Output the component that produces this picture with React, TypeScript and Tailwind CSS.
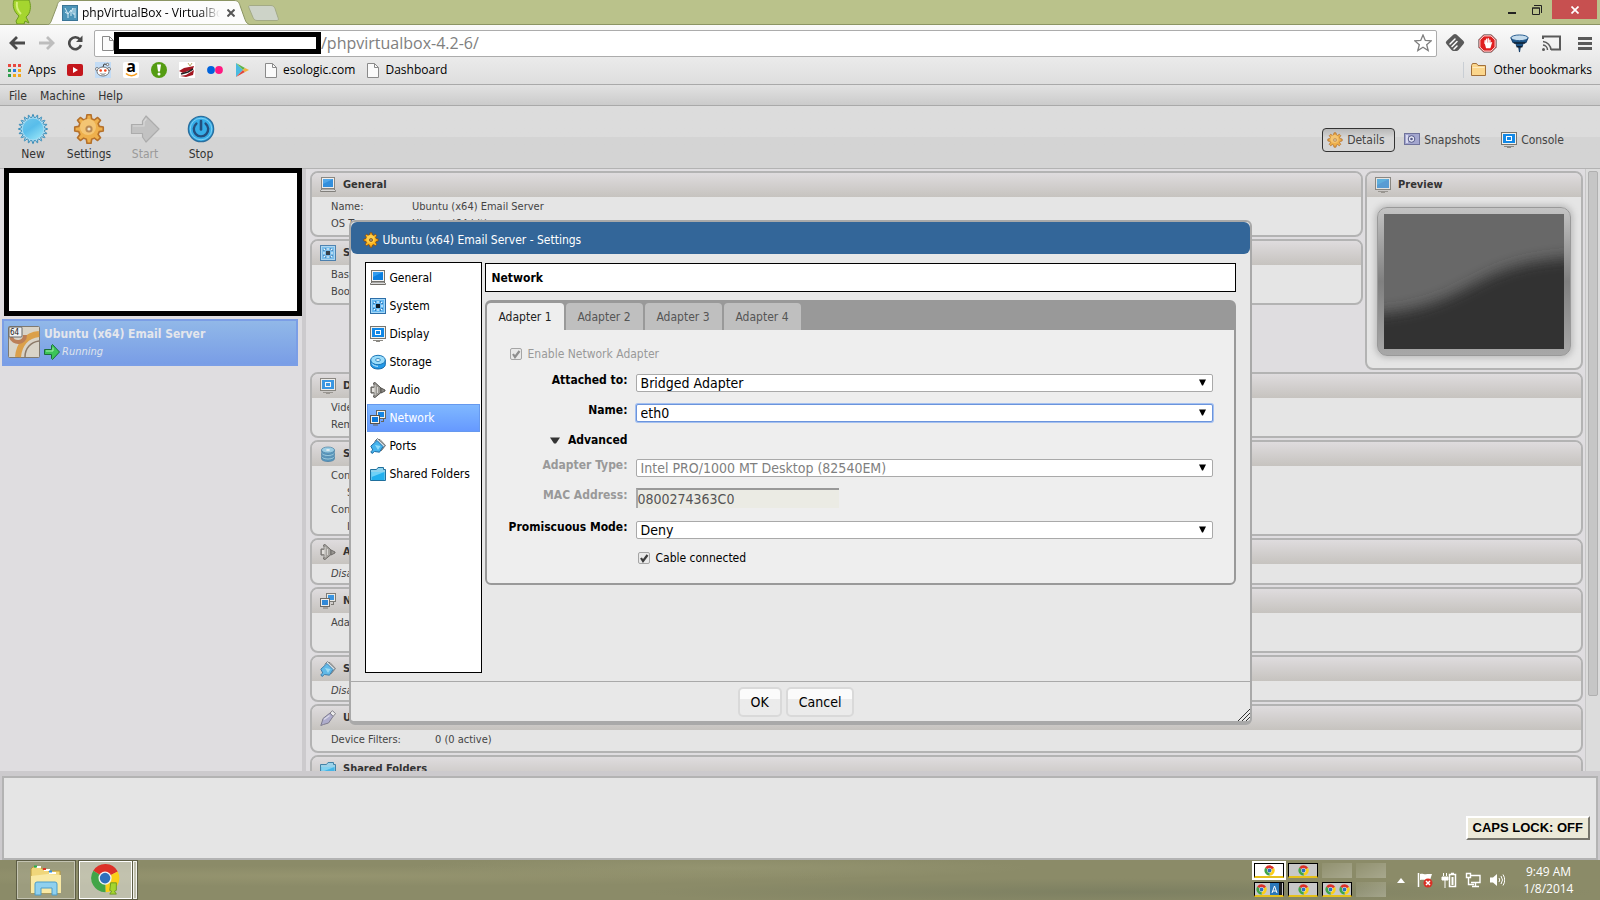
import { ReactNode, useState } from 'react'

const UI_FONT = "font-['DejaVu_Sans_Condensed','DejaVu_Sans',sans-serif]"
const CHROME_FONT = "font-['Open_Sans','Noto_Sans',sans-serif]"

/* ---------- icons ---------- */

function toothed(teeth: number, outer: number, inner: number, c: number, flat: number) {
  const pts: string[] = []
  const step = (Math.PI * 2) / teeth
  for (let i = 0; i < teeth; i++) {
    const a = i * step - Math.PI / 2
    const at = (r: number, t: number) => `${(c + r * Math.cos(t)).toFixed(2)},${(c + r * Math.sin(t)).toFixed(2)}`
    pts.push(at(inner, a - step * 0.32), at(outer, a - step * flat), at(outer, a + step * flat), at(inner, a + step * 0.32))
  }
  return pts.join(' ')
}

function Svg({ size = 16, box = 16, children }: { size?: number; box?: number; children: ReactNode }) {
  return (
    <svg width={size} height={size} viewBox={`0 0 ${box} ${box}`} className="shrink-0" fill="none" aria-hidden="true">
      {children}
    </svg>
  )
}

function GearIcon({ size = 16, muted = false }: { size?: number; muted?: boolean }) {
  return (
    <Svg size={size} box={32}>
      <polygon points={toothed(8, 14.4, 10.6, 16, 0.18)} fill={muted ? '#eeb04c' : '#ffb820'} stroke={muted ? '#b5702a' : '#8a4708'} strokeWidth="1.6" strokeLinejoin="round" />
      <circle cx="15" cy="14" r="8" fill={muted ? '#f6cf85' : '#ffd95e'} opacity="0.7" />
      <circle cx="16" cy="16" r="3.6" fill={muted ? '#b98a54' : '#5a3510'} />
      <circle cx="16" cy="16" r="1.6" fill="#f0e6d0" />
    </Svg>
  )
}

function NewIcon() {
  return (
    <Svg size={32} box={32}>
      <defs>
        <linearGradient id="burst" x1="0" y1="0" x2="0.7" y2="1">
          <stop offset="0" stopColor="#6fc7ec" />
          <stop offset="0.5" stopColor="#58bdea" />
          <stop offset="1" stopColor="#8fe0f6" />
        </linearGradient>
      </defs>
      <polygon points={toothed(20, 14.6, 11.6, 16, 0.04)} fill="#a9dcf2" stroke="#3c8db8" strokeWidth="1" />
      <circle cx="16" cy="16" r="10.4" fill="url(#burst)" />
    </Svg>
  )
}

function StartIcon() {
  return (
    <Svg size={32} box={32}>
      <path d="M2.500 11.500h11V8l3.500-5L30 16 17 29l-3.500-5v-3.500h-11z" fill="#c2c2c2" stroke="#acacac" strokeWidth="1.2" strokeLinejoin="round" />
      <path d="M4 13h11V8.500L17.500 5.500" stroke="#d8d8d8" strokeWidth="1.2" />
    </Svg>
  )
}

function StopIcon() {
  return (
    <Svg size={32} box={32}>
      <circle cx="16" cy="16" r="12.6" fill="#36aee8" stroke="#2a6e9e" strokeWidth="1.4" />
      <circle cx="16" cy="16" r="10.8" stroke="#7fd0f4" strokeWidth="1" />
      <path d="M11.4 10.6a7.2 7.2 0 1 0 9.2 0" stroke="#23507f" strokeWidth="2.4" strokeLinecap="round" />
      <path d="M16 8v8.5" stroke="#23507f" strokeWidth="2.6" strokeLinecap="round" />
    </Svg>
  )
}

function GeneralIcon() {
  return (
    <Svg>
      <rect x="1.5" y="0.5" width="13" height="11" fill="#f4f4f4" stroke="#77756e" />
      <rect x="3" y="2" width="10" height="8" fill="#0a7fe0" />
      <path d="M3 2h10L3 7z" fill="#2f9bef" />
      <path d="M2 12h12l1.5 1.5v1H.5v-1z" fill="#dcdcdc" stroke="#6f6d68" />
    </Svg>
  )
}

function SystemIcon() {
  return (
    <Svg>
      <rect x="0.5" y="0.5" width="15" height="15" fill="#66b9f2" stroke="#2c6ea8" />
      <rect x="1.5" y="1.5" width="13" height="13" stroke="#a5d8f8" />
      <rect x="6" y="6" width="4" height="4" fill="#101c28" />
      <path d="M8 3v2M8 11v2M3 8h2M11 8h2M4 4l1 1M12 4l-1 1M4 12l1-1M12 12l-1-1" stroke="#fff" />
      <path d="M5.5 3v1.5M10.5 3v1.5M5.5 11.5V13M10.5 11.5V13M3 5.5h1.5M3 10.5h1.5M11.5 5.5H13M11.5 10.5H13" stroke="#1b4f86" strokeWidth="0.6" />
    </Svg>
  )
}

function DisplayIcon() {
  return (
    <Svg>
      <rect x="0.5" y="0.5" width="15" height="12" fill="#f2f2ee" stroke="#77756e" />
      <rect x="2" y="2" width="12" height="9" fill="#1288e6" />
      <rect x="5.5" y="4.5" width="5" height="4" fill="#1288e6" stroke="#fff" />
      <path d="M3 14.5h10M6 15.5h4" stroke="#8c8a84" />
    </Svg>
  )
}

function PreviewIcon() {
  return (
    <Svg>
      <rect x="0.5" y="0.5" width="15" height="12" fill="#e8e8e4" stroke="#77756e" />
      <rect x="2" y="2" width="12" height="9" fill="#3a8fd4" />
      <path d="M2 2h12L2 8z" fill="#42a6de" />
      <path d="M3 14.5h10M6 15.5h4" stroke="#8c8a84" />
    </Svg>
  )
}

function StorageIcon() {
  return (
    <Svg>
      <path d="M.7 6v4.5C.7 13 4 15 8 15s7.300-2 7.300-4.500V6z" fill="#2299e8" stroke="#1566a6" />
      <ellipse cx="8" cy="6" rx="7.300" ry="4.700" fill="#9adcfa" stroke="#1b77b8" />
      <ellipse cx="8" cy="6" rx="2.400" ry="1.500" fill="#e9f7fe" stroke="#3c8fc4" />
      <path d="M2 9.500c1 2 3.500 2.800 6 2.800" stroke="#d4f1ff" />
    </Svg>
  )
}

function StackIcon() {
  return (
    <Svg>
      {[11, 7.5, 4].map((y) => (
        <g key={y}>
          <path d={`M1.500 ${y}v1.500c0 1.800 3 3 6.500 3s6.500-1.200 6.500-3v-1.500z`} fill="#3c93c8" stroke="#2c6c98" strokeWidth="0.8" />
          <ellipse cx="8" cy={y} rx="6.500" ry="3" fill="#8ccbe8" stroke="#37799f" strokeWidth="0.8" />
        </g>
      ))}
      <ellipse cx="8" cy="4" rx="2" ry="0.9" fill="#e4f2f8" />
    </Svg>
  )
}

function AudioIcon() {
  return (
    <Svg>
      <path d="M1 5L4.500 5 3.500 1 5 .500 11 6v4.500L5 15.500 3.500 15l1-4H1z" fill="#9b9994" stroke="#55534f" strokeLinejoin="round" />
      <path d="M5 3v10M7.500 5v6" stroke="#d8d6d2" />
      <path d="M2 6h2.500v4H2z" fill="#e4e2de" />
      <path d="M11 6l4 2v1l-4 2z" fill="#8b8984" stroke="#55534f" strokeLinejoin="round" />
    </Svg>
  )
}

function NetworkIcon() {
  return (
    <Svg>
      <rect x="6.500" y="0.500" width="9" height="8" fill="#f0f0ec" stroke="#66645e" />
      <rect x="8" y="2" width="6" height="5" fill="#1585e4" />
      <path d="M13 11.500h-2M13.500 9v3" stroke="#66645e" />
      <rect x="0.500" y="5.500" width="9" height="8" fill="#f4f4f0" stroke="#55534e" />
      <rect x="2" y="7" width="6" height="5" fill="#0a78da" />
      <path d="M3 15h5" stroke="#66645e" />
    </Svg>
  )
}

function PortsIcon() {
  return (
    <Svg>
      <path d="M6 1.500h4l5.500 6L11 13" stroke="#77756e" />
      <path d="M4.500 3.500l3-3 7.500 7-3.500 4.500" fill="#dfe6ea" stroke="#6c7880" />
      <path d="M.8 8.200L7 2.500l6 6-3.500 5.700-5-.7-2.500 2-1.200-1.800 2-1.700z" fill="#45b4ee" stroke="#1b6ba4" strokeLinejoin="round" />
      <path d="M5 7l3 5 2.500-4z" fill="#8fdcfb" />
    </Svg>
  )
}

function FolderIcon() {
  return (
    <Svg>
      <path d="M.5 14.500V3.500h6l1.500-2h5.500v2h2v11z" fill="#8ed3ee" stroke="#1f6f9c" />
      <path d="M1.500 6h13v8h-13z" fill="#22b0ee" />
      <path d="M1.500 6h13L1.500 11z" fill="#6ed2f8" />
    </Svg>
  )
}

function UsbIcon() {
  return (
    <Svg>
      <path d="M10 3l2.500-2.300 3 3L13 6.500z" fill="#f2f2f2" stroke="#6e6c76" />
      <path d="M3 8.500l7-5.500 3 3.500-4.500 6.500-5 1.500L.8 15.500 2 12z" fill="#a6a4cc" stroke="#6a6880" strokeLinejoin="round" />
      <path d="M4 9.500l5.500-4" stroke="#dddcf0" strokeWidth="1.500" />
    </Svg>
  )
}

function CameraIcon() {
  return (
    <Svg>
      <rect x="0.500" y="1.500" width="15" height="11" fill="#a3a6cf" stroke="#70739c" />
      <rect x="2" y="3" width="2" height="8" fill="#d9daf0" />
      <circle cx="7.500" cy="7" r="3.300" fill="#e6e8f6" stroke="#565a88" />
      <circle cx="7.500" cy="7" r="1.300" fill="#565a88" />
    </Svg>
  )
}

function PageIcon() {
  return (
    <svg width="12" height="15" viewBox="0 0 12 15" className="shrink-0" fill="none" aria-hidden="true">
      <path d="M.5.5h7l4 4v10H.5z" fill="#fafafa" stroke="#8a8a8a" />
      <path d="M7.500.500v4h4" stroke="#8a8a8a" />
    </svg>
  )
}

function ChromeLogo({ size }: { size: number }) {
  return (
    <Svg size={size} box={32}>
      <path d="M16 16L3.500 8.200A15 15 0 0 1 29.500 9z" fill="#dc3128" />
      <path d="M16 16L29.500 9A15 15 0 0 1 16.500 31z" fill="#fbcf18" />
      <path d="M16 16l.5 15A15 15 0 0 1 3.500 8.200z" fill="#42a548" />
      <circle cx="16" cy="16" r="7" fill="#f4f4f4" />
      <circle cx="16" cy="16" r="5.600" fill="#2f70bd" />
    </Svg>
  )
}

/* ---------- browser chrome ---------- */

function TabStrip() {
  return (
    <header className="flex h-[25px] items-start border-b border-[#8b9463] bg-[#bac28b]">
      <svg width="20" height="24" viewBox="0 0 20 24" className="ml-3 shrink-0" aria-hidden="true">
        <path d="M2 0h15c2 4 2 11-1 15l-2 2 3 6-4-2-1 3H5l-1-3 3-5C2 12 0 6 2 0z" fill="#a5d52f" stroke="#6d9a1e" />
        <path d="M5 2c-1 5 1 9 4 12" stroke="#d6f07c" strokeWidth="2" fill="none" />
      </svg>
      <div className="relative ml-[14px] flex h-[25px] w-[206px] items-center pl-4">
        <svg className="absolute inset-0" width="206" height="25" viewBox="0 0 206 25" fill="none" aria-hidden="true">
          <path d="M0 25c4 0 5-3 6-6l5-13c1-4 2-5.500 6-5.500h171c4 0 5 2 6 5l5 14c1 3 3 5.500 7 5.500z" fill="#fcfcfc" stroke="#8b9463" />
        </svg>
        <svg className="relative shrink-0" width="16" height="16" viewBox="0 0 16 16" fill="none" aria-hidden="true">
          <rect x="0.500" y="0.500" width="15" height="15" fill="#4c94b8" stroke="#3a7596" />
          <path d="M3 3l3 6v4M13 3v10M3 7l3 2 3-4v6M9 7l2-4v6h2" stroke="#d8eef8" />
        </svg>
        <span className="relative ml-1 w-[138px] overflow-hidden bg-linear-to-r from-black from-85% to-transparent bg-clip-text text-xs whitespace-nowrap text-transparent">
          phpVirtualBox - VirtualBox
        </span>
        <button aria-label="Close tab" className="relative ml-[7px]">
          <svg width="8" height="8" viewBox="0 0 8 8" aria-hidden="true">
            <path d="M.5.500l7 7M7.500.500l-7 7" stroke="#555" strokeWidth="2" />
          </svg>
        </button>
      </div>
      <button aria-label="New tab" className="-ml-1 mt-[5px]">
        <svg width="32" height="16" viewBox="0 0 32 16" aria-hidden="true">
          <path d="M2 .5h21c2 0 3 1 4 3l3 9c1 2 0 3-1 3H9c-2 0-3-1-4-3L1 3C0 1 1 .500 2 .500z" fill="#cdd3c8" stroke="#a3aa86" />
        </svg>
      </button>
      <div className="ml-auto flex items-start pr-[3px]">
        <button aria-label="Minimize" className="flex h-[21px] w-[20px] items-center justify-center">
          <span className="mt-1 h-[2px] w-2 bg-[#222]" />
        </button>
        <button aria-label="Restore" className="flex h-[19px] w-[30px] items-center justify-center">
          <svg width="10" height="10" viewBox="0 0 10 10" fill="none" aria-hidden="true">
            <path d="M.5 3h7v6.500h-7zM0 3h8M2 .500h7.500V8" stroke="#222" />
          </svg>
        </button>
        <button aria-label="Close" className="flex h-[19px] w-[45px] items-center justify-center bg-[#c75050]">
          <svg width="8" height="8" viewBox="0 0 8 8" aria-hidden="true">
            <path d="M.5.500l7 7M7.500.500l-7 7" stroke="#fff" strokeWidth="1.700" />
          </svg>
        </button>
      </div>
    </header>
  )
}

function AddressRow() {
  return (
    <div className="flex h-8 items-center pt-1 pr-2 pl-[9px]">
      <button aria-label="Back">
        <svg width="17" height="14" viewBox="0 0 17 14" fill="none" aria-hidden="true">
          <path d="M8 1L2 7l6 6M2 7h14" stroke="#4a4a4a" strokeWidth="2.800" />
        </svg>
      </button>
      <button aria-label="Forward" className="ml-3">
        <svg width="17" height="14" viewBox="0 0 17 14" fill="none" aria-hidden="true">
          <path d="M9 1l6 6-6 6M15 7H1" stroke="#bdbdbd" strokeWidth="2.800" />
        </svg>
      </button>
      <button aria-label="Reload" className="ml-3">
        <svg width="16" height="16" viewBox="0 0 16 16" fill="none" aria-hidden="true">
          <path d="M13 4.500A6 6 0 1 0 14 10" stroke="#4a4a4a" strokeWidth="2.600" />
          <path d="M15.500.500v6.500H9z" fill="#4a4a4a" />
        </svg>
      </button>
      <div className="ml-[11px] flex h-[27px] flex-1 items-center rounded-xs border border-[#acacac] bg-white pl-[7px]">
        <PageIcon />
        <input aria-label="Address" className="h-[22px] w-[207px] border-5 border-black bg-white outline-none" />
        <span className="flex-1 text-base leading-5 text-[#808080]">/phpvirtualbox-4.2-6/</span>
        <button aria-label="Bookmark this page" className="mr-1">
          <svg width="18" height="18" viewBox="0 0 18 18" fill="none" aria-hidden="true">
            <path d="M9 1l2.300 5.500 5.900.400-4.500 3.800 1.500 5.800L9 13.300l-5.200 3.200 1.500-5.800L.800 6.900l5.900-.400z" stroke="#7e7e7e" strokeWidth="1.300" />
          </svg>
        </button>
      </div>
      <div className="ml-2 flex items-center gap-[13px]">
        <Svg size={20} box={20}>
          <path d="M8.500 1.500q1.500-1.200 3 0l7 6.500q1.500 1.500 0 3l-5 6q-1 1-2 1h-3q-1 0-2-1l-5-6q-1.500-1.500 0-3z" fill="#5a5a5a" />
          <path d="M5 11l5-5M7 13.500l5-5M9 16l3-3" stroke="#fff" strokeWidth="1.500" strokeLinecap="round" />
        </Svg>
        <Svg size={19} box={20}>
          <path d="M6 .800h8L19.200 6v8L14 19.200H6L.800 14V6z" fill="#e01f1f" stroke="#777" />
          <path d="M6.300 2h7.400L18 6.300v7.400L13.700 18H6.300L2 13.700V6.300z" stroke="#fff" strokeWidth="0.900" />
          <path d="M7.500 10V7M9 9V5.500M10.800 9V5M12.500 9V6.500" stroke="#fff" strokeWidth="1.400" strokeLinecap="round" />
          <path d="M6.800 9h6.400l1.800-.500-2 6.500H8.500z" fill="#fff" />
        </Svg>
        <Svg size={19} box={20}>
          <path d="M1 4l2 5h3l1 4h2l1 6 1-6h2l1-4h3l2-5z" fill="#1b5487" stroke="#123a66" />
          <ellipse cx="10" cy="4" rx="9" ry="3" fill="#c5dced" stroke="#23588c" />
          <path d="M4 9.500h12M7 13.500h6" stroke="#0d1e30" strokeWidth="1.500" />
        </Svg>
        <Svg size={19} box={19}>
          <path d="M1 5V2.500h17v13H9" stroke="#5a5a5a" strokeWidth="2" />
          <path d="M1 7.500a9 9 0 0 1 8 8.500M1 11a5 5 0 0 1 4.500 5" stroke="#5a5a5a" strokeWidth="1.500" />
          <circle cx="1.500" cy="15.500" r="1.500" fill="#5a5a5a" />
        </Svg>
        <button aria-label="Chrome menu" className="ml-1 flex w-[14px] flex-col gap-[2px]">
          <span className="h-[3px] bg-[#5a5a5a]" />
          <span className="h-[3px] bg-[#5a5a5a]" />
          <span className="h-[3px] bg-[#5a5a5a]" />
        </button>
      </div>
    </div>
  )
}

function BookmarkBar() {
  const appColors = ['#e8483f', '#e8483f', '#e8483f', '#2f9e4f', '#2c7be0', '#f2a71b', '#2f9e4f', '#f2a71b', '#f2a71b']
  return (
    <nav className="flex h-[27px] items-center pr-2 pb-px pl-2 text-xs text-black">
      <a href="#apps" className="flex items-center gap-[7px]">
        <Svg size={13} box={13}>
          {appColors.map((c, i) => (
            <rect key={i} x={(i % 3) * 5} y={Math.floor(i / 3) * 5} width="3" height="3" fill={c} />
          ))}
        </Svg>
        Apps
      </a>
      <div className="ml-[11px] flex items-center gap-3">
        <a href="#youtube" aria-label="YouTube">
          <Svg>
            <rect x="0" y="2" width="16" height="12" rx="2" fill="#c4161c" />
            <path d="M6 5l5 3-5 3z" fill="#fff" />
          </Svg>
        </a>
        <a href="#reddit" aria-label="reddit">
          <Svg>
            <rect width="16" height="16" fill="#c3dcf5" />
            <path d="M8 5l1-3 3 .500" stroke="#444" />
            <circle cx="12.500" cy="2.500" r="1.200" fill="#fff" stroke="#444" strokeWidth="0.700" />
            <circle cx="2" cy="7" r="1.500" fill="#fff" stroke="#555" strokeWidth="0.700" />
            <circle cx="14" cy="7" r="1.500" fill="#fff" stroke="#555" strokeWidth="0.700" />
            <ellipse cx="8" cy="9.500" rx="6" ry="4.500" fill="#fff" stroke="#555" strokeWidth="0.800" />
            <circle cx="5.700" cy="8.500" r="1.300" fill="#f4421a" />
            <circle cx="10.300" cy="8.500" r="1.300" fill="#f4421a" />
            <path d="M5.500 11.500c1.500 1 3.500 1 5 0" stroke="#555" strokeWidth="0.800" />
          </Svg>
        </a>
        <a href="#amazon" aria-label="Amazon" className="flex h-4 w-4 flex-col items-center rounded-xs bg-white">
          <span className="h-[11px] text-base leading-[8px] font-bold">a</span>
          <svg width="13" height="4" viewBox="0 0 13 4" fill="none" aria-hidden="true">
            <path d="M1 .500c3 3 8 3 11 0" stroke="#f59b1a" strokeWidth="1.600" />
          </svg>
        </a>
        <a href="#alerts" aria-label="Alerts">
          <Svg>
            <circle cx="8" cy="8" r="8" fill="#549c12" />
            <path d="M6 2.500h4L9 9.500H7z" fill="#fff" />
            <circle cx="8" cy="12" r="1.500" fill="#fff" />
          </Svg>
        </a>
        <a href="#lips" aria-label="Lips">
          <Svg>
            <rect width="16" height="16" fill="#fff" />
            <path d="M0 9l5-3 10-2-1 3-5 2-5 2z" fill="#a31621" />
            <path d="M1 14l6-1 8-5-1 5-7 2z" fill="#a31621" />
            <path d="M2 12l7-2 5-3" stroke="#222" strokeWidth="1.500" />
            <path d="M9 1l2 3 2-3" stroke="#b9a96a" />
          </Svg>
        </a>
        <a href="#flickr" aria-label="Flickr">
          <Svg>
            <circle cx="4" cy="8" r="3.900" fill="#0063dc" />
            <circle cx="12" cy="8" r="3.900" fill="#ff1981" />
          </Svg>
        </a>
        <a href="#play" aria-label="Google Play">
          <Svg>
            <path d="M1 1l7 7-7 7z" fill="#4bbbe0" />
            <path d="M1 1l9 5-2 2z" fill="#5fb548" />
            <path d="M1 15l9-5-2-2z" fill="#e0483e" />
            <path d="M10 6l4 2-4 2-2-2z" fill="#f3b13c" />
          </Svg>
        </a>
      </div>
      <a href="#esologic" className="ml-[14px] flex items-center gap-[6px]">
        <PageIcon />
        esologic.com
      </a>
      <a href="#dashboard" className="ml-3 flex items-center gap-[6px]">
        <PageIcon />
        Dashboard
      </a>
      <a href="#other" className="ml-auto flex items-center gap-1.5 border-l border-[#c9ced4] pl-[7px]">
        <Svg>
          <path d="M.5 13.500v-10l1-2h4l1.500 2h7.500v10z" fill="#fbd68c" stroke="#a2703a" strokeLinejoin="round" />
          <path d="M1.500 5.500h12" stroke="#fdebc0" />
        </Svg>
        Other bookmarks
      </a>
    </nav>
  )
}

/* ---------- application ---------- */

function MenuBar() {
  return (
    <nav className="flex h-[22px] items-center gap-[13px] border-y border-[#a9a9a9] bg-linear-to-b from-[#e2e2e2] to-[#cbcbcb] pt-px pl-[9px] text-xs text-[#333]">
      <button>File</button>
      <button>Machine</button>
      <button>Help</button>
    </nav>
  )
}

function ToolButton({ label, icon, disabled }: { label: string; icon: ReactNode; disabled?: boolean }) {
  return (
    <button disabled={disabled} className="flex w-14 flex-col items-center gap-[2px] text-xs text-[#333] disabled:text-[#9a9a9a]">
      {icon}
      <span className="leading-[14px]">{label}</span>
    </button>
  )
}

function ToolBar() {
  return (
    <div className="flex h-[63px] items-center justify-between border-b border-[#b3b3b3] bg-linear-to-b from-[#dcdcdc] from-50% to-[#d4d4d4] to-50% pr-9 pl-[5px]">
      <div className="flex">
        <ToolButton label="New" icon={<NewIcon />} />
        <ToolButton label="Settings" icon={<GearIcon size={32} muted />} />
        <ToolButton label="Start" icon={<StartIcon />} disabled />
        <ToolButton label="Stop" icon={<StopIcon />} />
      </div>
      <div className="flex items-center gap-[9px] pt-1.5 text-xs text-[#444]">
        <button className="flex h-6 w-[73px] items-center gap-1 rounded-[4px] border border-[#333] bg-linear-to-b from-[#b8b8b8] to-[#d6d6d6] to-40% pl-1">
          <GearIcon muted />
          Details
        </button>
        <button className="flex w-[88px] items-center gap-1">
          <CameraIcon />
          Snapshots
        </button>
        <button className="flex items-center gap-1">
          <DisplayIcon />
          Console
        </button>
      </div>
    </div>
  )
}

function MachineList() {
  return (
    <aside className="w-[302px] shrink-0 bg-[#dfdde0]">
      <div className="-mt-px ml-1 h-[148px] border-5 border-black bg-white" />
      <button className="mt-[3px] ml-0.5 flex h-[47px] w-[296px] gap-1 border-2 border-[#7b9ee6] bg-linear-to-b from-[#91b8e8] to-[#799de6] pt-[5px] pl-1 text-left">
        <svg width="32" height="32" viewBox="0 0 32 32" fill="none" className="shrink-0" aria-hidden="true">
          <rect x="0.500" y="0.500" width="31" height="31" rx="1" fill="#d9d4c8" stroke="#7f7a70" />
          <path d="M10 31C11 19 18 9 31 8" stroke="#dba04a" strokeWidth="6" />
          <path d="M17 31c0-9 6-15 14-16" stroke="#8c7a68" strokeWidth="1.500" />
          <path d="M3 11c2 7 14 7 14-2" stroke="#bb7f58" strokeWidth="4" />
          <rect x="1" y="1" width="13" height="10" rx="1" fill="#f1f1f1" stroke="#666" />
          <text x="2" y="9" fontSize="8" fill="#222">64</text>
        </svg>
        <span className="flex flex-col">
          <span className="text-xs leading-4 font-bold text-[#e4e6ec]">Ubuntu (x64) Email Server</span>
          <span className="flex items-center gap-0.5 pt-0.5 text-[#dfe3ec]">
            <Svg>
              <path d="M.5 5.500h7v-4l1-1 7 7.500-7 7.500-1-1v-4h-7z" fill="#3cc458" stroke="#1c6e3a" strokeLinejoin="round" />
              <path d="M2 7h7V3.500" stroke="#a6efae" />
            </Svg>
            <em className="text-[11px]">Running</em>
          </span>
        </span>
      </button>
    </aside>
  )
}

type Row = { name: string; value?: string; indent?: boolean; italic?: boolean }

type SectionProps = {
  title: string
  icon: ReactNode
  rows?: Row[]
  height: string
  nameWidth?: string
  children?: ReactNode
}

function Section({ title, icon, rows = [], height, nameWidth = 'w-[81px]', children }: SectionProps) {
  return (
    <section className={`shrink-0 overflow-hidden rounded-lg border-2 border-[#b3b3b3] bg-[#e5e5e5] ${height}`}>
      <h2 className="flex h-6 items-center gap-[7px] bg-linear-to-b from-[#dfdcde] to-[#c6c3bf] pl-2 text-[11px] font-bold text-[#333]">
        <span className="opacity-80">{icon}</span>
        {title}
      </h2>
      {children}
      <dl className="pt-px pl-[19px] text-[11px] leading-[17px] text-[#444]">
        {rows.map((row, i) => (
          <div key={i} className={row.indent ? 'flex pl-4' : 'flex'}>
            <dt className={`${nameWidth} shrink-0 whitespace-nowrap ${row.italic ? 'italic' : ''}`}>{row.name}</dt>
            {row.value && <dd>{row.value}</dd>}
          </div>
        ))}
      </dl>
    </section>
  )
}

function PreviewScreen() {
  return (
    <div className="mx-[10px] mt-[10px] rounded-[10px] border border-[#999] bg-linear-to-b from-[#c4c4c4] via-[#808080] to-[#a8a8a8] p-1.5 shadow-[0_0_6px_2px_#bbb]">
      <svg className="block w-full" height="135" viewBox="0 0 180 135" preserveAspectRatio="none" aria-hidden="true">
        <defs>
          <filter id="soft" x="-20%" y="-20%" width="140%" height="140%">
            <feGaussianBlur stdDeviation="7" />
          </filter>
        </defs>
        <rect width="180" height="135" fill="#686868" />
        <path d="M-40 101C20 101 50 92 90 70S160 44 220 42v140H-40z" fill="#323232" filter="url(#soft)" />
      </svg>
    </div>
  )
}

function DetailsPane() {
  return (
    <div className="flex min-w-0 flex-1 flex-col gap-[2px] overflow-hidden bg-[#dfdde0] pt-[2px] pr-[2px] pl-1">
      <div className="flex shrink-0 gap-[2px]">
        <div className="flex min-w-0 flex-1 flex-col gap-[2px]">
          <Section
            title="General"
            icon={<GeneralIcon />}
            height="h-[66px]"
            rows={[
              { name: 'Name:', value: 'Ubuntu (x64) Email Server' },
              { name: 'OS Type:', value: 'Ubuntu (64 bit)' },
            ]}
          />
          <Section
            title="System"
            icon={<SystemIcon />}
            height="h-[66px]"
            rows={[{ name: 'Base Memory:' }, { name: 'Boot Order:' }]}
          />
        </div>
        <div className="flex w-[218px] flex-col">
          <Section title="Preview" icon={<PreviewIcon />} height="h-[199px]">
            <PreviewScreen />
          </Section>
        </div>
      </div>
      <Section title="Display" icon={<DisplayIcon />} height="h-[66px]" rows={[{ name: 'Video Memory:' }, { name: 'Remote Desktop:' }]} />
      <Section
        title="Storage"
        icon={<StackIcon />}
        height="h-[96px]"
        rows={[
          { name: 'Controller: IDE' },
          { name: 'SATA Port 0', indent: true },
          { name: 'Controller: SATA' },
          { name: 'IDE Primary', indent: true },
        ]}
      />
      <Section title="Audio" icon={<AudioIcon />} height="h-[47px]" rows={[{ name: 'Disabled', italic: true }]} />
      <Section title="Network" icon={<NetworkIcon />} height="h-[66px]" rows={[{ name: 'Adapter 1:' }]} />
      <Section title="Serial Ports" icon={<PortsIcon />} height="h-[47px]" rows={[{ name: 'Disabled', italic: true }]} />
      <Section
        title="USB"
        icon={<UsbIcon />}
        height="h-[49px]"
        nameWidth="w-[104px]"
        rows={[{ name: 'Device Filters:', value: '0 (0 active)' }]}
      />
      <Section title="Shared Folders" icon={<FolderIcon />} height="h-[66px]" rows={[{ name: 'None', italic: true }]} />
    </div>
  )
}

/* ---------- settings dialog ---------- */

const PAGES = [
  { label: 'General', icon: <GeneralIcon /> },
  { label: 'System', icon: <SystemIcon /> },
  { label: 'Display', icon: <DisplayIcon /> },
  { label: 'Storage', icon: <StorageIcon /> },
  { label: 'Audio', icon: <AudioIcon /> },
  { label: 'Network', icon: <NetworkIcon /> },
  { label: 'Ports', icon: <PortsIcon /> },
  { label: 'Shared Folders', icon: <FolderIcon /> },
]

const ADAPTERS = ['Adapter 1', 'Adapter 2', 'Adapter 3', 'Adapter 4']

type FieldProps = { id: string; label: string; height: string; muted?: boolean; children: ReactNode }

function Field({ id, label, height, muted, children }: FieldProps) {
  return (
    <div className={`grid grid-cols-[141px_1fr] items-center gap-x-2 ${height}`}>
      <label htmlFor={id} className={`pb-1.5 text-right text-xs font-bold ${muted ? 'text-[#999]' : 'text-black'}`}>
        {label}
      </label>
      {children}
    </div>
  )
}

function SelectBox({ id, value, disabled, focused }: { id: string; value: string; disabled?: boolean; focused?: boolean }) {
  const ring = focused ? 'border-[#6b94dc] ring-1 ring-[#a4c0f0]' : 'border-[#a9a9a9]'
  return (
    <div className="relative flex">
      <select
        id={id}
        disabled={disabled}
        className={`h-[18px] w-full appearance-none rounded-xs border bg-white pl-1 text-sm leading-4 text-black disabled:text-[#7f7f7f] ${ring}`}
      >
        <option>{value}</option>
      </select>
      <svg className="pointer-events-none absolute top-[5px] right-[7px]" width="7" height="7" viewBox="0 0 7 7" aria-hidden="true">
        <path d="M0 0.500h7L4 6.500h-1z" fill="#000" />
      </svg>
    </div>
  )
}

function Check({ id, label, disabled }: { id: string; label: string; disabled?: boolean }) {
  const [checked, setChecked] = useState(true)
  return (
    <label htmlFor={id} className={`flex items-center gap-1.5 text-xs ${disabled ? 'text-[#999]' : 'text-black'}`}>
      <span className="relative flex">
        <input
          id={id}
          type="checkbox"
          disabled={disabled}
          checked={checked}
          onChange={(e) => setChecked(e.target.checked)}
          className="h-3 w-3 appearance-none rounded-xs border border-[#a5a5a5] bg-[#e9e9e9]"
        />
        {checked && (
          <svg className="pointer-events-none absolute inset-0" width="12" height="12" viewBox="0 0 12 12" fill="none" aria-hidden="true">
            <path d="M3 6l2 3 4.500-6" stroke={disabled ? '#8f8f8f' : '#3c3c3c'} strokeWidth="2.200" />
          </svg>
        )}
      </span>
      {label}
    </label>
  )
}

function AdapterForm() {
  return (
    <form className="pt-3 pr-[21px] pb-[11px]">
      <div className="flex h-[26px] items-start pt-1 pl-[23px]">
        <Check id="enable" label="Enable Network Adapter" disabled />
      </div>
      <Field id="attached" label="Attached to:" height="h-[30px]">
        <SelectBox id="attached" value="Bridged Adapter" />
      </Field>
      <Field id="name" label="Name:" height="h-[30px]">
        <SelectBox id="name" value="eth0" focused />
      </Field>
      <div className="grid h-7 grid-cols-[141px_1fr] items-center">
        <button type="button" className="flex items-center justify-end gap-2 pb-1 text-xs font-bold">
          <svg width="10" height="7" viewBox="0 0 10 7" aria-hidden="true">
            <path d="M0 .500h10L6 6.500H4z" fill="#333" />
          </svg>
          Advanced
        </button>
      </div>
      <Field id="type" label="Adapter Type:" height="h-6" muted>
        <SelectBox id="type" value="Intel PRO/1000 MT Desktop (82540EM)" disabled />
      </Field>
      <Field id="mac" label="MAC Address:" height="h-9" muted>
        <input
          id="mac"
          disabled
          defaultValue="0800274363C0"
          className="h-5 w-[203px] border-t-2 border-l-2 border-[#999] border-l-[#aaa] bg-[#ebebe4] text-sm text-[#545454]"
        />
      </Field>
      <Field id="mode" label="Promiscuous Mode:" height="h-7">
        <SelectBox id="mode" value="Deny" />
      </Field>
      <div className="flex h-7 items-center pl-[151px]">
        <Check id="cable" label="Cable connected" />
      </div>
    </form>
  )
}

function SettingsDialog() {
  const [page, setPage] = useState('Network')
  const [adapter, setAdapter] = useState('Adapter 1')
  const button =
    'h-[30px] rounded-[5px] border-2 border-[#d9d9d9] bg-linear-to-b from-[#fbfbfb] from-40% to-[#ebebeb] to-40% px-[11px] text-sm text-black'

  return (
    <div
      role="dialog"
      aria-label="Ubuntu (x64) Email Server - Settings"
      className="flex w-[903px] flex-col rounded-md border-2 border-b-4 border-[#a9a9a9] bg-[#e8e8e8]"
    >
      <div className="flex h-8 items-center gap-1 rounded-md bg-[#336699] pt-1 pl-3 text-xs text-white">
        <GearIcon />
        Ubuntu (x64) Email Server - Settings
      </div>
      <div className="flex gap-[3px] px-[14px] pt-2 pb-2">
        <nav className="h-[411px] w-[117px] shrink-0 border border-black bg-white p-px text-xs">
          {PAGES.map((p) => (
            <button
              key={p.label}
              onClick={() => setPage(p.label)}
              className={`flex h-7 w-full items-center gap-1 border ${
                p.label === page
                  ? 'border-[#6699ee] bg-linear-to-b from-[#80b8ff] to-[#6699ff] pl-[2px] text-white'
                  : 'border-transparent pl-[2px] text-black'
              }`}
            >
              {p.icon}
              <span className="whitespace-nowrap">{p.label}</span>
            </button>
          ))}
        </nav>
        <div className="min-w-0 flex-1">
          <h1 className="mt-px flex h-[29px] items-center border border-black bg-white pl-1.5 text-xs font-bold">Network</h1>
          <div className="mt-2 rounded-md border-2 border-[#999] bg-[#eee]">
            <div role="tablist" className="flex gap-[2px] bg-[#999] pt-px">
              {ADAPTERS.map((a) => (
                <button
                  key={a}
                  role="tab"
                  aria-selected={a === adapter}
                  onClick={() => setAdapter(a)}
                  className={`h-[27px] w-[77px] rounded-t-[4px] text-xs ${a === adapter ? 'bg-[#eee] text-[#222]' : 'bg-[#bfbfbf] text-[#555]'}`}
                >
                  {a}
                </button>
              ))}
            </div>
            <AdapterForm />
          </div>
        </div>
      </div>
      <div className="relative flex h-10 items-center justify-center gap-1 border-t border-[#a9a9a9] pr-2">
        <button className={button}>OK</button>
        <button className={button}>Cancel</button>
        <svg className="absolute right-0 bottom-0" width="12" height="12" viewBox="0 0 12 12" aria-hidden="true">
          <path d="M0 12L12 0M4 12l8-8M8 12l4-4" stroke="#333" />
        </svg>
      </div>
    </div>
  )
}

/* ---------- taskbar ---------- */

function Desk({ logos = 0, active, doc }: { logos?: number; active?: boolean; doc?: boolean }) {
  if (!logos) return <span className="h-[15px] w-[30px] bg-linear-to-br from-white/5 to-white/25" />
  const look = active ? 'bg-white outline-2 outline-white' : 'bg-[#c8c8c8]'
  return (
    <span className={`flex h-[15px] w-[30px] items-center justify-around border border-b-2 border-black border-b-[#e5c01c] ${look}`}>
      {Array.from({ length: logos }, (_, i) => (
        <ChromeLogo key={i} size={11} />
      ))}
      {doc && (
        <Svg size={12} box={12}>
          <rect width="9" height="12" fill="#2b78b8" />
          <path d="M2 10l2.500-7L7 10M3 8h3" stroke="#fff" />
          <rect x="9" width="3" height="12" fill="#222" />
        </Svg>
      )}
    </span>
  )
}

function TaskBar() {
  return (
    <footer className="flex h-10 shrink-0 items-stretch justify-between bg-[#8b8b68] bg-[radial-gradient(ellipse_at_20%_40%,#95946f,transparent_30%),radial-gradient(ellipse_at_70%_80%,#7d8062,transparent_30%),radial-gradient(ellipse_at_45%_20%,#949470,transparent_25%)]">
      <div className="flex gap-[2px] pl-4">
        <button aria-label="File Explorer" className="flex w-[60px] items-center justify-center border border-[#5d5d45] bg-white/15 inset-ring inset-ring-white/40">
          <Svg size={32} box={32}>
            <path d="M1 29V5l2-2h8l1 2h5l1 2h12v22z" fill="#f0d67a" stroke="#b89a3c" />
            <path d="M6 3h5M14 6h6M19 9h7" stroke="#fff" strokeWidth="2" />
            <path d="M4 2.500h3" stroke="#22b14c" strokeWidth="2" />
            <path d="M13 5h3" stroke="#d9362b" strokeWidth="2" />
            <path d="M19 7.500h3" stroke="#2b8fe0" strokeWidth="2" />
            <path d="M1 12l17-2 13 1v18H1z" fill="#f9e9a4" />
            <path d="M5 31V20q0-2 2-2h18q2 0 2 2v11h-5v-7H11v7z" fill="#8fd0ee" stroke="#4c9cc8" />
          </Svg>
        </button>
        <button aria-label="Google Chrome" className="flex w-[60px] items-stretch border border-[#5d5d45]">
          <span className="flex flex-1 items-center justify-center bg-white/45 inset-ring inset-ring-white">
            <svg width="32" height="34" viewBox="0 0 34 36" fill="none" aria-hidden="true">
              <path d="M16 16L3.500 8.200A15 15 0 0 1 29.500 9z" fill="#dc3128" />
              <path d="M16 16L29.500 9A15 15 0 0 1 16.500 31z" fill="#fbcf18" />
              <path d="M16 16l.5 15A15 15 0 0 1 3.500 8.200z" fill="#42a548" />
              <circle cx="16" cy="16" r="7" fill="#f4f4f4" />
              <circle cx="16" cy="16" r="5.600" fill="#2f70bd" />
              <path d="M22 21h6v8l-2 1 2 3h-7l2-3-2-1z" fill="#a5d52f" stroke="#6d9a1e" />
            </svg>
          </span>
          <span className="w-[5px] border-l border-[#5d5d45] bg-white/45 inset-ring inset-ring-white/80" />
        </button>
      </div>
      <div className={`flex items-center text-xs text-white ${CHROME_FONT}`}>
        <div className="grid grid-cols-4 gap-1">
          <Desk logos={1} active />
          <Desk logos={1} />
          <Desk />
          <Desk />
          <Desk logos={1} doc />
          <Desk logos={1} />
          <Desk logos={2} />
          <Desk />
        </div>
        <div className="ml-[11px] flex items-center gap-2">
          <svg width="8" height="5" viewBox="0 0 8 5" className="mr-1" aria-hidden="true">
            <path d="M4 0l4 5H0z" fill="#fff" />
          </svg>
          <Svg>
            <path d="M1.500 1v14" stroke="#fff" strokeWidth="1.500" />
            <path d="M3 2c3-1 4 1 7 0h5l-2 6c-4 1-6-1-10 0z" fill="#fff" />
            <circle cx="11" cy="11" r="4.500" fill="#d93025" />
            <path d="M9 9l4 4M13 9l-4 4" stroke="#fff" strokeWidth="1.500" />
          </Svg>
          <Svg>
            <path d="M8.500 2.500h6v12h-6zM10 1.500h3" stroke="#fff" strokeWidth="1.500" />
            <path d="M2.500 1v3M5.500 1v3M1 5h6v3H1zM4 8v8" fill="#fff" stroke="#fff" />
            <path d="M10.500 5h2v8h-2z" fill="#fff" />
          </Svg>
          <Svg>
            <path d="M6 3.500h9v7H6M10.500 11v3M7 14.500h7M1.500 1.500h4v4h-4zM3.500 6v6.500H9" stroke="#fff" strokeWidth="1.400" />
          </Svg>
          <Svg>
            <path d="M1 5.500h3L8 2v12l-4-3.500H1z" fill="#fff" />
            <path d="M10 6q1.500 2 0 4M12 4q3 4 0 8M14 2.500q3.500 5.500 0 11" stroke="#fff" />
          </Svg>
        </div>
        <div className="w-[87px] text-center leading-[17px]">
          <div>9:49 AM</div>
          <div>1/8/2014</div>
        </div>
        <div className="w-2" />
      </div>
    </footer>
  )
}

export default function App() {
  return (
    <div className={`relative flex h-screen flex-col overflow-hidden bg-[#cccacd] ${UI_FONT}`}>
      <div className={`shrink-0 ${CHROME_FONT}`}>
        <TabStrip />
        <div className="bg-linear-to-b from-[#fafafa] to-[#dedede]">
          <AddressRow />
          <BookmarkBar />
        </div>
      </div>
      <MenuBar />
      <ToolBar />
      <main className="flex min-h-0 flex-1">
        <MachineList />
        <div className="ml-1 flex min-w-0 flex-1">
          <DetailsPane />
          <div className="w-[15px] shrink-0 border-l border-[#c8c8c8] bg-[#dcdcdc] px-[2px] pt-[2px]">
            <div className="h-[525px] rounded-xs border border-[#b0b0b0] bg-[#c6c6c6]" />
          </div>
        </div>
      </main>
      <div className="mt-[5px] mr-[2px] ml-[2px] flex h-[84px] shrink-0 items-end justify-end border-2 border-[#b3b3b3] bg-[#e5e5e5] pr-1.5 pb-[18px]">
        <div className="border-t-2 border-r-2 border-b-2 border-l-2 border-[#fff] border-r-[#77756c] border-b-[#77756c] bg-[#ece9d8] px-[5px] font-['Liberation_Sans',sans-serif] text-[13px] leading-5 font-bold">
          CAPS LOCK: OFF
        </div>
      </div>
      <TaskBar />
      <div className="absolute inset-x-0 top-[220px] flex justify-center">
        <SettingsDialog />
      </div>
    </div>
  )
}
